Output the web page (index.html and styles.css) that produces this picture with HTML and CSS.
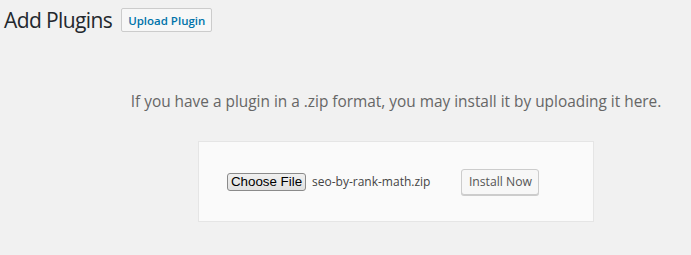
FILE: index.html
```html
<!DOCTYPE html>
<html lang="en">
<head>
<meta charset="utf-8">
<title>Add Plugins</title>
<link rel="stylesheet" href="styles.css">
</head>
<body>
<div class="wrap">
  <div class="header">
    <h1 class="title">Add Plugins</h1>
    <a class="page-title-action" href="#">Upload Plugin</a>
  </div>
  <div class="upload-plugin">
    <p class="install-help">If you have a plugin in a .zip format, you may install it by uploading it here.</p>
    <form class="upload-form">
      <span class="file-button">Choose File</span>
      <span class="file-name">seo-by-rank-math.zip</span>
      <button type="button" class="install-btn">Install Now</button>
    </form>
  </div>
</div>
</body>
</html>
```
FILE: styles.css
```css
html, body {
  margin: 0;
  padding: 0;
}
body {
  background: #f1f1f1;
  font-family: "Open Sans", "Noto Sans", sans-serif;
  color: #444;
  height: 255px;
  overflow: hidden;
}
.wrap {
  padding: 8px 0 0 4px;
}
.header {
  display: flex;
  align-items: center;
  gap: 9px;
}
.title {
  margin: 0;
  font-size: 21px;
  letter-spacing: -0.6px;
  font-weight: 400;
  line-height: 24px;
  color: #23282d;
}
.page-title-action {
  display: inline-flex;
  align-items: center;
  justify-content: center;
  box-sizing: border-box;
  width: 91px;
  height: 24px;
  padding: 0;
  font-size: 11.5px;
  font-weight: 600;
  color: #0073aa;
  background: #f7f7f7;
  border: 1px solid #ccc;
  border-radius: 2px;
  text-decoration: none;
}
.upload-plugin {
  margin-left: 97px;
}
.install-help {
  margin: 60px 0 0;
  text-align: center;
  font-size: 15.4px;
  line-height: 20px;
  color: #666;
}
.upload-form {
  box-sizing: border-box;
  width: 396px;
  height: 81px;
  margin: 29px auto 0;
  background: #fafafa;
  border: 1px solid #e5e5e5;
  display: flex;
  align-items: center;
  padding: 0 0 0 28px;
}
.file-button {
  box-sizing: border-box;
  height: 18px;
  width: 79px;
  display: inline-flex;
  align-items: center;
  justify-content: center;
  font-family: "Liberation Sans", Arial, sans-serif;
  font-size: 13.33px;
  color: #000;
  background: linear-gradient(#f0f0f0, #e1e1e1);
  border: 1px solid #8a8a8a;
  border-radius: 3px;
}
.file-name {
  margin-left: 6px;
  font-size: 12px;
  color: #444;
}
.install-btn {
  box-sizing: border-box;
  margin-left: 31px;
  height: 26px;
  width: 78px;
  padding: 0;
  font-family: "Open Sans", "Noto Sans", sans-serif;
  font-size: 12.2px;
  color: #555;
  background: #f7f7f7;
  border: 1px solid #ccc;
  border-radius: 3px;
  box-shadow: 0 1px 0 #ccc;
}
```
